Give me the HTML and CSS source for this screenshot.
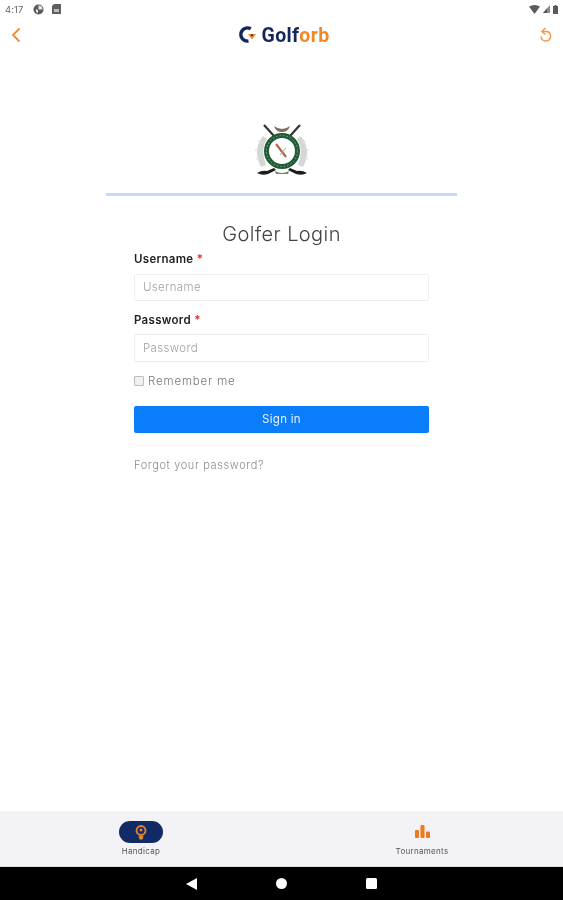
FILE: index.html
```html
<!DOCTYPE html>
<html lang="en">
<head>
<meta charset="utf-8">
<title>Golforb</title>
<link rel="stylesheet" href="styles.css">
</head>
<body>
<div class="app">
  <div class="status">
    <div class="status-side">
      <span class="time">4:17</span>
      <svg class="s-ic" width="11" height="11" viewBox="0 0 11 11"><circle cx="5.5" cy="5.5" r="5" fill="#5a5a5a"/><path d="M5.5 1.5v4H9.5A4 4 0 0 0 5.500 1.500z" fill="#e8e8e8"/><path d="M3 5l2 1v3L3 8z" fill="#e8e8e8"/></svg>
      <svg class="s-ic" width="9" height="10" viewBox="0 0 9 10"><path d="M2 0h7v10H0V2z" fill="#5f5f5f"/><rect x="2" y="5" width="5" height="3" fill="#bdbdbd"/></svg>
    </div>
    <div class="status-side">
      <svg width="11" height="9" viewBox="0 0 11 9"><path d="M0 1.500Q5.500-1.500 11 1.500L5.500 9z" fill="#5a5a5a"/></svg>
      <svg width="7" height="8" viewBox="0 0 7 8"><path d="M7 0v8H0z" fill="#8a8a8a"/><path d="M4 3.500V8H0z" fill="#555"/></svg>
      <svg width="5" height="9" viewBox="0 0 5 9"><path d="M1.500 0h2v1H5v8H0V1h1.500z" fill="#5a5a5a"/></svg>
    </div>
  </div>
  <header class="top">
    <svg class="ic-back" width="10" height="16" viewBox="0 0 10 16"><path d="M8.500 1.500 2 8l6.500 6.500" fill="none" stroke="#ee8a32" stroke-width="1.800"/></svg>
    <div class="brand">
      <svg width="19" height="18" viewBox="0 0 19 18"><path d="M12.800 2.800A6.600 6.600 0 1 0 10.500 15" fill="none" stroke="#14265c" stroke-width="3.400"/><path d="M10 8h8l-4 5.500z" fill="#ef8a2b"/><circle cx="14" cy="9.200" r="1" fill="#14265c"/></svg>
      <span class="brand-name">Golf<span class="brand-accent">orb</span></span>
    </div>
    <svg class="ic-reset" width="14" height="16" viewBox="0 0 14 16"><path d="M3.500 4.500H8a4.800 4.800 0 1 1-6 5" fill="none" stroke="#f09a4c" stroke-width="1.500"/><path d="M6.500 1 3 4.500 6.500 7.500" fill="none" stroke="#f09a4c" stroke-width="1.500"/></svg>
  </header>
  <main class="main">
    <svg class="crest" width="54" height="56" viewBox="0 0 54 56">
      <path d="M9 3l10 11M45 3 35 14" stroke="#333" stroke-width="2.200"/>
      <path d="M19 4q8 6 16 0-2 6-8 6t-8-6z" fill="#7d6f60"/>
      <path d="M8 14Q-3 28 6 45l5-2Q5 28 12 17z" fill="#d4d8d4"/>
      <path d="M46 14q11 14 2 31l-5-2q6-15-1-26z" fill="#d4d8d4"/>
      <path d="M6 20l-3-1M3 28H0M4 36l-3 1M48 20l3-1M51 28h3M50 36l3 1" stroke="#e2e5e2" stroke-width="1.500"/>
      <circle cx="27" cy="29" r="15.500" fill="#fff" stroke="#1f5c35" stroke-width="5"/>
      <circle cx="27" cy="29" r="15.500" fill="none" stroke="#8aa592" stroke-width="1" stroke-dasharray="1.500 2"/>
      <path d="M21 22l10 13" stroke="#b5654f" stroke-width="2.200"/>
      <path d="M25 33l6-7" stroke="#a9a9a0" stroke-width="1"/>
      <path d="M2 51q5-3 10-2l7-3 2 2-8 4q-6 2-11-1zM52 51q-5-3-10-2l-7-3-2 2 8 4q6 2 11-1z" fill="#1d1d1d"/>
      <path d="M20 49q7 4 14 0l-1 3H21z" fill="#77806a"/>
    </svg>
    <div class="rule"></div>
    <h1 class="title">Golfer Login</h1>
    <form class="form">
      <label class="label">Username <span class="req">*</span></label>
      <div class="input">Username</div>
      <label class="label label-second">Password <span class="req">*</span></label>
      <div class="input">Password</div>
      <div class="remember"><span class="check"></span>Remember me</div>
      <div class="btn">Sign in</div>
      <div class="sep"></div>
      <div class="forgot">Forgot your password?</div>
    </form>
  </main>
  <nav class="tabs">
    <div class="tab tab-left">
      <span class="pill">
        <svg width="12" height="15" viewBox="0 0 12 15"><circle cx="6" cy="5.500" r="4.500" fill="none" stroke="#e8862f" stroke-width="1.800"/><circle cx="6" cy="5" r="1.500" fill="#e8862f"/><path d="M3.500 11h5l-1 3.500h-3z" fill="#e8862f"/></svg>
      </span>
      <span class="tab-label">Handicap</span>
    </div>
    <div class="tab tab-right">
      <span class="pill pill-plain">
        <svg class="bars" width="15" height="13" viewBox="0 0 15 13"><rect x="0" y="5" width="4" height="8" rx="1" fill="#ed7a1c"/><rect x="5.500" y="0" width="4" height="13" rx="1" fill="#ed7a1c"/><rect x="11" y="6.500" width="4" height="6.500" rx="1" fill="#ed7a1c"/></svg>
      </span>
      <span class="tab-label">Tournaments</span>
    </div>
  </nav>
  <div class="sysnav">
    <svg width="12" height="12" viewBox="0 0 12 12"><path d="M12 0v12L1 6z" fill="#fff"/></svg>
    <svg width="11" height="11" viewBox="0 0 11 11"><circle cx="5.500" cy="5.500" r="5.500" fill="#fff"/></svg>
    <svg width="11" height="11" viewBox="0 0 11 11"><rect width="11" height="11" rx="1.500" fill="#fff"/></svg>
  </div>
</div>
</body>
</html>
```
FILE: styles.css
```css
* { box-sizing: border-box; }
html, body { margin: 0; padding: 0; background: #fff; }
body { font-family: "Inter", "Liberation Sans", sans-serif; color: #333; }
.app { width: 563px; height: 900px; display: flex; flex-direction: column; overflow: hidden; filter: blur(.35px); }

.status { height: 18px; flex: none; display: flex; justify-content: space-between; align-items: center; padding: 0 5px 0 5px; }
.status-side { display: flex; align-items: center; gap: 3px; }
.time { font-size: 9.500px; color: #666; margin-right: 6px; letter-spacing: .1px; }
.s-ic { margin-right: 5px; }

.top { height: 34px; flex: none; display: flex; align-items: center; justify-content: space-between; padding: 0 10px 0 11px; }
.brand { display: flex; align-items: center; gap: 4px; margin-left: 8px; }
.brand-name { font-family: "Roboto", "Liberation Sans", sans-serif; font-weight: 700; font-size: 19.500px; color: #14265c; letter-spacing: .35px; }
.brand-accent { color: #ef8a2b; }

.main { flex: 1; display: flex; flex-direction: column; align-items: center; padding-top: 70px; }
.crest { flex: none; }
.rule { width: 351px; height: 3px; background: #c5d9fa; margin-top: 15px; }
.title { margin: 25px 0 0; font-size: 20px; line-height: 26px; font-weight: 300; color: #444; letter-spacing: .4px; }
.form { width: 295px; display: flex; flex-direction: column; margin-top: 4px; }
.label { font-size: 11.500px; line-height: 16px; font-weight: 600; color: #222; letter-spacing: .3px; }
.label-second { margin-top: 11px; }
.req { color: #f5222d; }
.input { height: 27px; margin-top: 7px; border: 1px solid #eee; border-radius: 2px; padding-left: 8px; font-size: 11.500px; line-height: 25px; font-weight: 300; color: #a2a2a2; letter-spacing: .35px; }
.label-second + .input { margin-top: 6px; height: 28px; line-height: 26px; }
.remember { display: flex; align-items: center; gap: 4px; margin-top: 12px; font-size: 11.500px; line-height: 14px; font-weight: 300; color: #777; letter-spacing: .85px; }
.check { width: 10px; height: 10px; border: 1px solid #bdbdbd; background: #f0f0f0; border-radius: 1px; }
.btn { height: 27px; margin-top: 18px; border-radius: 2px; background: #0a7dfb; color: #e6f1ff; text-align: center; font-size: 11.500px; line-height: 27px; letter-spacing: .3px; }
.sep { height: 1px; background: #f5f5f5; margin-top: 12px; }
.forgot { margin-top: 12px; font-size: 11px; line-height: 14px; font-weight: 300; color: #8d8d8d; letter-spacing: .62px; }

.tabs { height: 56px; flex: none; background: #f2f2f7; display: flex; border-bottom: 1px solid #ddd; }
.tab { flex: none; display: flex; flex-direction: column; align-items: center; width: 90px; padding-top: 10px; }
.tab-left { margin-left: 96px; }
.tab-right { margin-left: 191px; }
.pill { width: 44px; height: 22px; border-radius: 11px; background: #122a66; display: flex; align-items: center; justify-content: center; }
.pill-plain { background: none; }
.bars { margin-bottom: 2px; }
.tab-label { margin-top: 3px; font-size: 8px; line-height: 11px; color: #555; letter-spacing: .3px; }

.sysnav { height: 33px; flex: none; background: #000; display: flex; align-items: center; justify-content: center; gap: 79px; padding-right: 1px; }
```
